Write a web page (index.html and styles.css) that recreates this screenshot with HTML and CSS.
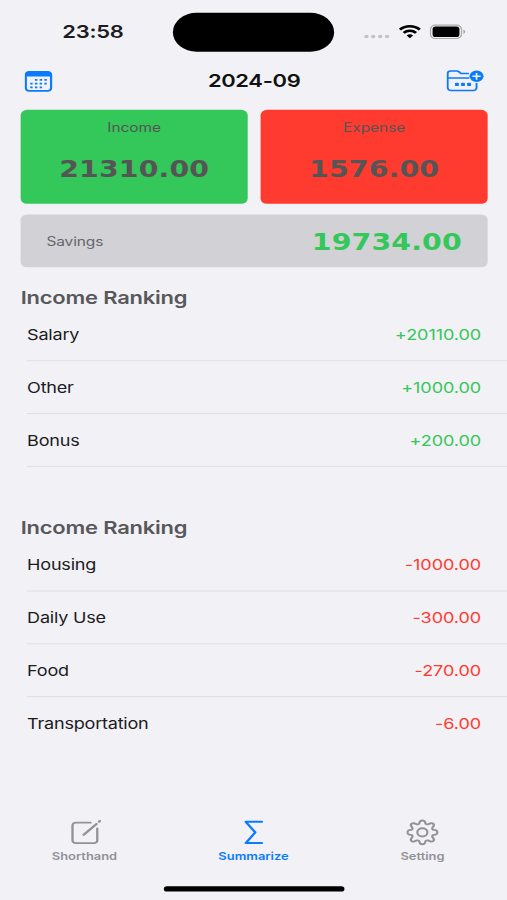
FILE: index.html
```html
<!DOCTYPE html>
<html lang="en">
<head>
    <meta charset="UTF-8">
    <meta name="viewport" content="width=device-width, initial-scale=1.0">
    <title>Summarize</title>
    <link rel="stylesheet" href="styles.css">
</head>
<body>
    <div class="phone">
        <!-- Status bar -->
        <div class="status-bar">
            <div class="time">23:58</div>
            <div class="island"></div>
            <svg class="status-icons" width="80" height="16" viewBox="0 0 80 16">
                <g fill="#c3c3c7">
                    <circle cx="2" cy="12.5" r="1.7"/>
                    <circle cx="7.3" cy="12.5" r="1.7"/>
                    <circle cx="12.7" cy="12.5" r="1.7"/>
                    <circle cx="18" cy="12.5" r="1.7"/>
                </g>
                <g fill="none" stroke="#000" stroke-width="2.3">
                    <path d="M28 6.1a10.8 10.8 0 0 1 15.4 0"/>
                    <path d="M30.9 9.1a6.8 6.8 0 0 1 9.6 0"/>
                </g>
                <path d="M33.2 11.6a3.6 3.6 0 0 1 5 0l-2.5 2.6z" fill="#000"/>
                <rect x="51.7" y="1.8" width="24" height="12.6" rx="3.8" fill="none" stroke="#a9a9ad"/>
                <rect x="53.3" y="3.2" width="20.8" height="9.8" rx="2.4" fill="#000"/>
                <path d="M77.2 6.2v3.8a2 2 0 0 0 0-3.8z" fill="#a0a0a4"/>
            </svg>
        </div>

        <!-- Navigation -->
        <div class="nav">
            <svg width="22" height="20" viewBox="0 0 22 20">
                <rect x="1" y="1" width="19.6" height="18" rx="2.6" fill="none" stroke="#0a7aff" stroke-width="1.7"/>
                <path d="M1 5.4V3.4A2.4 2.4 0 0 1 3.4 1h14.8a2.4 2.4 0 0 1 2.4 2.4v2z" fill="#0a7aff"/>
                <g fill="none" stroke="#0a7aff" stroke-width="1.7" stroke-dasharray="1.9 1.75">
                    <path d="M8.1 8.7h9.3"/>
                    <path d="M4.4 12.2h13"/>
                    <path d="M4.4 15.7h9.3"/>
                </g>
            </svg>
            <div class="nav-title">2024-09</div>
            <svg width="29" height="21" viewBox="0 0 29 21">
                <g fill="none" stroke="#0a7aff" stroke-width="1.5">
                    <path d="M17.5 3.6h-6.2L9.6 1.8C9.1 1.3 8.7 1.2 8 1.2H3.4A2.4 2.4 0 0 0 1 3.6v13.5a2.6 2.6 0 0 0 2.6 2.6h17.2a2.6 2.6 0 0 0 2.6-2.6v-4.6"/>
                    <path d="M1 7.8h16.8"/>
                </g>
                <g fill="#0a7aff">
                    <rect x="6.7" y="12.3" width="3" height="3.2" rx=".8"/>
                    <rect x="11.4" y="12.3" width="3" height="3.2" rx=".8"/>
                    <rect x="16.1" y="12.3" width="3" height="3.2" rx=".8"/>
                    <circle cx="23.4" cy="6.2" r="5.5"/>
                </g>
                <path d="M23.4 3v6.4M20.2 6.2h6.4" stroke="#f2f1f6" stroke-width="1.3"/>
            </svg>
        </div>

        <!-- Totals -->
        <div class="totals">
            <div class="total income">
                <div class="total-label">Income</div>
                <div class="amount">21310.00</div>
            </div>
            <div class="total expense">
                <div class="total-label">Expense</div>
                <div class="amount">1576.00</div>
            </div>
        </div>
        <div class="savings">
            <span class="savings-label">Savings</span>
            <span class="amount">19734.00</span>
        </div>

        <!-- Rankings -->
        <div class="ranking first">
            <h2>Income Ranking</h2>
            <div class="row"><span>Salary</span><span class="plus">+20110.00</span></div>
            <div class="row"><span>Other</span><span class="plus">+1000.00</span></div>
            <div class="row"><span>Bonus</span><span class="plus">+200.00</span></div>
        </div>
        <div class="ranking second">
            <h2>Income Ranking</h2>
            <div class="row"><span>Housing</span><span class="minus">-1000.00</span></div>
            <div class="row"><span>Daily Use</span><span class="minus">-300.00</span></div>
            <div class="row"><span>Food</span><span class="minus">-270.00</span></div>
            <div class="row last"><span>Transportation</span><span class="minus">-6.00</span></div>
        </div>

        <!-- Tab bar -->
        <div class="tabs">
            <div class="tab">
                <svg width="26" height="26" viewBox="0 0 26 26" fill="none" stroke="#929297" stroke-width="1.8" stroke-linecap="round">
                    <path d="M17.2 3.8H5.8a2.6 2.6 0 0 0-2.6 2.6v14.2a2.6 2.6 0 0 0 2.6 2.6h14a2.6 2.6 0 0 0 2.6-2.6V9.2"/>
                    <path d="M11.9 15.3L21.8 5" stroke-width="2"/>
                    <path d="M23.9 2.8l.4-.4" stroke-width="2.2"/>
                </svg>
                <span>Shorthand</span>
            </div>
            <div class="tab active">
                <svg width="26" height="26" viewBox="0 0 26 26" fill="none" stroke="#0a7aff" stroke-width="1.9" stroke-linecap="round" stroke-linejoin="round">
                    <path d="M19 3H6.5l7.4 10-7.4 10.1H19"/>
                </svg>
                <span>Summarize</span>
            </div>
            <div class="tab">
                <svg width="26" height="26" viewBox="0.6 0 26 26" fill="none" stroke="#929297" stroke-width="1.7" stroke-linejoin="round">
                    <path d="M11.2 2.4Q13 1.1 14.8 2.4L15.6 5Q16.3 5.6 17.2 5.4L19.7 4.2Q22 4.2 22 6.5L20.7 8.8Q20.5 9.7 21.1 10.4L23.9 11.2Q25.3 13 23.9 14.8L21.1 15.6Q20.5 16.3 20.7 17.2L22 19.5Q22 21.8 19.7 21.8L17.2 20.6Q16.3 20.4 15.6 21L14.8 23.6Q13 24.9 11.2 23.6L10.4 21Q9.7 20.4 8.8 20.6L6.3 21.8Q4 21.8 4 19.5L5.3 17.2Q5.5 16.3 4.9 15.6L2.1 14.8Q.7 13 2.1 11.2L4.9 10.4Q5.5 9.7 5.3 8.8L4 6.5Q4 4.2 6.3 4.2L8.8 5.4Q9.7 5.6 10.4 5Z"/>
                    <circle cx="13" cy="13" r="3.9"/>
                </svg>
                <span>Setting</span>
            </div>
        </div>
        <div class="home-indicator"></div>
    </div>
</body>
</html>
```

FILE: styles.css
```css
* {
    margin: 0;
    padding: 0;
    box-sizing: border-box;
}

body {
    width: 507px;
    height: 900px;
    overflow: hidden;
    background: #f2f1f6;
    font-family: Inter, "Liberation Sans", sans-serif;
}

svg {
    display: block;
    flex: none;
}

/* 393x852 screen stretched to the window */
.phone {
    width: 393px;
    height: 852px;
    display: flex;
    flex-direction: column;
    transform: scale(1.2901, 1.0563);
    transform-origin: 0 0;
    color: #1c1c1e;
}

/* Status bar */
.status-bar {
    height: 59px;
    padding: 12px 31px 0 0;
    display: grid;
    grid-template-columns: 134px 125px 1fr;
    align-items: start;
}

.time {
    padding-left: 10px;
    text-align: center;
    font-size: 17px;
    font-weight: 600;
    line-height: 37px;
    letter-spacing: -0.2px;
}

.island {
    height: 37px;
    border-radius: 19px;
    background: #000;
}

.status-icons {
    margin-top: 10px;
    justify-self: end;
}

/* Navigation */
.nav {
    height: 44px;
    padding: 0 18px 9px 19px;
    display: grid;
    grid-template-columns: 1fr auto 1fr;
    align-items: center;
}

.nav svg:last-child {
    justify-self: end;
}

.nav-title {
    font-size: 17px;
    font-weight: 600;
    line-height: 20px;
    letter-spacing: -0.25px;
    padding-bottom: 1px;
    color: #111;
}

/* Totals */
.totals {
    padding: 0 15px 0 16px;
    margin-top: 1px;
    display: flex;
    gap: 10px;
}

.total {
    flex: 1;
    height: 89px;
    border-radius: 5px;
    text-align: center;
    color: #555;
}

.income {
    background: #34c759;
}

.expense {
    background: #ff3b30;
}

.total-label {
    margin-top: 9px;
    font-size: 12px;
    line-height: 16px;
    letter-spacing: -0.05px;
}

.amount {
    font-family: "DejaVu Sans", sans-serif;
    font-size: 22px;
    font-weight: bold;
    line-height: 26px;
    letter-spacing: 0.1px;
}

.total .amount {
    margin-top: 19px;
}

.savings {
    height: 50px;
    margin: 10px 15px 0 16px;
    padding: 0 20px;
    display: flex;
    align-items: center;
    justify-content: space-between;
    border-radius: 5px;
    background: #d1d1d6;
}

.savings-label {
    font-size: 12px;
    letter-spacing: -0.1px;
    color: #65656a;
}

.savings .amount {
    padding-top: 3px;
    color: #34c759;
}

/* Rankings */
.first {
    height: 218px;
    padding-top: 19px;
}

.ranking h2 {
    padding-left: 16px;
    font-size: 17px;
    font-weight: 600;
    line-height: 20px;
    letter-spacing: -0.15px;
    color: #58585b;
}

.row {
    height: 50px;
    margin-left: 21px;
    padding-right: 20px;
    display: flex;
    align-items: center;
    justify-content: space-between;
    border-bottom: 1px solid #dfdfe4;
    font-size: 14px;
    letter-spacing: -0.18px;
}

.last {
    border-bottom-color: transparent;
}

.plus,
.minus {
    letter-spacing: -0.05px;
}

.plus {
    color: #34c759;
}

.minus {
    color: #ff3b30;
}

.second {
    padding-top: 19px;
}

/* Tab bar */
.tabs {
    margin-top: auto;
    display: flex;
    color: #929297;
}

.tab {
    flex: 1;
    display: flex;
    flex-direction: column;
    align-items: center;
    gap: 3px;
    font-size: 10px;
    font-weight: 600;
    line-height: 12px;
}

.active {
    color: #0a7aff;
}

.home-indicator {
    width: 140px;
    height: 5px;
    margin: 23px auto 8px;
    border-radius: 3px;
    background: #000;
}
```
